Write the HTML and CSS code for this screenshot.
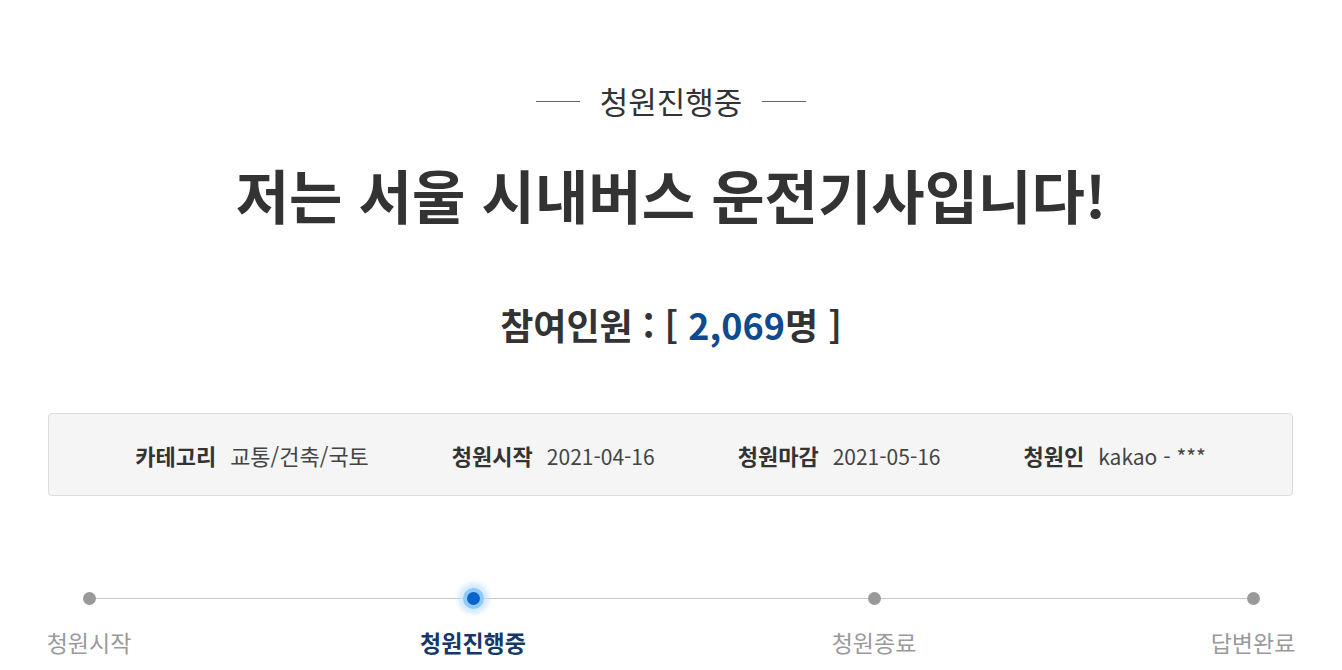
FILE: index.html
```html
<!DOCTYPE html>
<html lang="ko">
<head>
<meta charset="utf-8">
<title>청원진행중</title>
<link rel="stylesheet" href="styles.css">
</head>
<body>
<div class="page">
  <div class="status"><span class="status-line"></span><span class="status-text">청원진행중</span><span class="status-line"></span></div>
  <h1 class="title">저는 서울 시내버스 운전기사입니다!</h1>
  <p class="count">참여인원 : [ <span class="count-num">2,069</span>명 ]</p>
  <div class="info">
    <div class="info-item"><span class="info-label">카테고리</span><span class="info-value info-value-kr">교통/건축/국토</span></div>
    <div class="info-item"><span class="info-label">청원시작</span><span class="info-value">2021-04-16</span></div>
    <div class="info-item"><span class="info-label">청원마감</span><span class="info-value">2021-05-16</span></div>
    <div class="info-item"><span class="info-label">청원인</span><span class="info-value">kakao - ***</span></div>
  </div>
  <div class="steps">
    <div class="step"><span class="dot"></span><span class="step-label">청원시작</span></div>
    <div class="spacer"></div>
    <div class="step step-active"><span class="dot"></span><span class="step-label">청원진행중</span></div>
    <div class="spacer"></div>
    <div class="step"><span class="dot"></span><span class="step-label">청원종료</span></div>
    <div class="spacer"></div>
    <div class="step"><span class="dot"></span><span class="step-label">답변완료</span></div>
  </div>
</div>
</body>
</html>
```
FILE: styles.css
```css
html, body {
  margin: 0;
  padding: 0;
  background: #fff;
}
body {
  font-family: "Noto Sans CJK KR", "Noto Sans", sans-serif;
  color: #333;
}
.page {
  width: 1246px;
  margin: 0 auto;
  padding-top: 80px;
}
.status {
  display: flex;
  align-items: center;
  justify-content: center;
  gap: 20px;
  height: 42px;
}
.status-line {
  width: 44px;
  height: 1px;
  background: #666;
}
.status-text {
  font-size: 31px;
  line-height: 42px;
  color: #333;
}
.title {
  margin: 40px 0 0;
  text-align: center;
  font-size: 58px;
  line-height: 64px;
  font-weight: 700;
  color: #333;
}
.count {
  margin: 74px 0 0;
  text-align: center;
  font-size: 36px;
  line-height: 48px;
  font-weight: 700;
  color: #333;
}
.count-num {
  color: #0f4a8f;
}
.info {
  margin-top: 65px;
  height: 83px;
  box-sizing: border-box;
  background: #f5f5f5;
  border: 1px solid #dcdcdc;
  border-radius: 4px;
  display: flex;
  align-items: center;
  justify-content: center;
  gap: 83px;
  width: 1245px;
}
.info-item {
  display: flex;
  align-items: baseline;
  gap: 14px;
  font-size: 21px;
}
.info-label {
  font-size: 22px;
  font-weight: 700;
  color: #333;
}
.info-value {
  color: #444;
}
.info-value-kr {
  font-size: 22px;
}
.steps {
  position: relative;
  margin-top: 96px;
  display: grid;
  grid-template-columns: 82px 292px 102px 309px 82px 297px 82px;
}
.steps::before {
  content: "";
  position: absolute;
  left: 41px;
  right: 43px;
  top: 6px;
  height: 1px;
  background: #c8c8c8;
}
.step {
  display: flex;
  flex-direction: column;
  align-items: center;
  position: relative;
}
.dot {
  width: 13px;
  height: 13px;
  border-radius: 50%;
  background: #999;
}
.step-active .dot {
  background: #0a63c9;
  box-shadow: 0 0 0 4px #8fcaf8, 0 0 4px 9px rgba(186, 222, 255, 0.6);
}
.step-label {
  margin-top: 21px;
  font-size: 23px;
  line-height: 32px;
  color: #9a9a9a;
  white-space: nowrap;
}
.step-active .step-label {
  color: #15386a;
  font-weight: 700;
}
```
